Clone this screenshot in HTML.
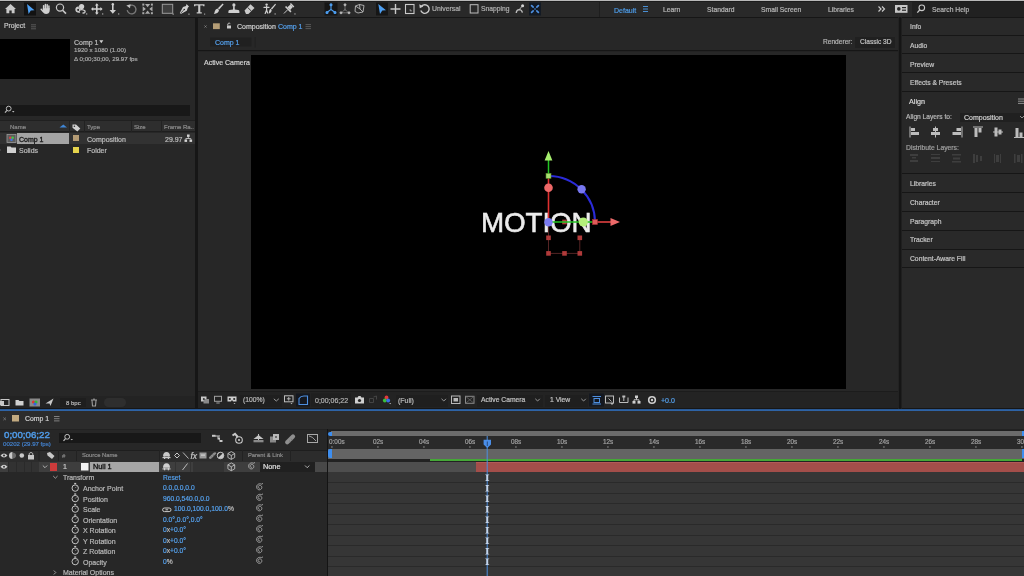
<!DOCTYPE html>
<html><head><meta charset="utf-8">
<style>
*{margin:0;padding:0;box-sizing:border-box}
html,body{width:1024px;height:576px;overflow:hidden;background:#161616;font-family:"Liberation Sans",sans-serif;color:#bdbdbd}
.a{position:absolute}
.t{position:absolute;white-space:nowrap;line-height:1;will-change:transform;-webkit-text-stroke-width:0.2px}
.bl{color:#55a0ec}
svg{position:absolute;overflow:visible}
</style></head><body>
<!-- top line -->
<div class="a" style="left:0;top:0;width:1024px;height:1px;background:#b9b9b9"></div>
<!-- toolbar -->
<div class="a" id="toolbar" style="left:0;top:1px;width:1024px;height:16px;background:#292929;border-top:1px solid #1c1c1c"></div>


<!-- toolbar icons -->
<svg style="left:0;top:0" width="1024" height="18" viewBox="0 0 1024 18">
 <g fill="#c9c9c9" stroke="none">
  <!-- home -->
  <path d="M10.5 4 L16 9 L14.6 9 L14.6 13.2 L11.7 13.2 L11.7 10.6 L9.3 10.6 L9.3 13.2 L6.4 13.2 L6.4 9 L5 9 Z"/>
 </g>
 <rect x="24" y="2.5" width="12" height="13" fill="#121212"/>
 <path d="M27 4 L34.5 10.2 L30.8 10.4 L28.6 14 Z" fill="#4d9ff2"/>
 <!-- hand -->
 <g stroke="#cfcfcf" stroke-width="1.45" stroke-linecap="round" fill="none">
  <path d="M43.6 9 L43.6 5.6 M45.4 8.5 L45.4 4.4 M47.2 8.5 L47.2 4.6 M48.9 9 L48.9 6"/>
  <path d="M41.2 9.3 L43.2 11.6"/>
 </g>
 <path d="M42.8 8.3 L49.7 8.3 L49.7 11 Q49.2 14 46 14 Q43.8 14 42.8 12 Z" fill="#cfcfcf"/>
 <!-- zoom -->
 <circle cx="60" cy="7.6" r="3.6" fill="none" stroke="#c9c9c9" stroke-width="1.2"/>
 <path d="M62.6 10.2 L66 13.6" stroke="#c9c9c9" stroke-width="1.6"/>
 <!-- orbit camera -->
 <circle cx="81.6" cy="6.6" r="2.6" fill="#cfcfcf"/>
 <path d="M78.5 7.2 Q75.8 7.4 76 10 Q76.4 12.4 79.5 12.2 M80 9.8 Q83 9 85 11 Q85.5 13.2 83 13" fill="none" stroke="#cfcfcf" stroke-width="1.3" stroke-linecap="round"/>
 <circle cx="78.2" cy="9.9" r="1.6" fill="none" stroke="#cfcfcf" stroke-width="1.1"/>
 <rect x="86" y="13.3" width="1.3" height="1.3" fill="#9a9a9a"/>
 <!-- move cross -->
 <path d="M96.8 4.5 L96.8 13.5 M92.3 9 L101.3 9" stroke="#cfcfcf" stroke-width="1.6"/>
 <path d="M96.8 3.2 L94.9 5.4 L98.7 5.4 Z M96.8 14.8 L94.9 12.6 L98.7 12.6 Z M91 9 L93.2 7.1 L93.2 10.9Z M102.6 9 L100.4 7.1 L100.4 10.9 Z" fill="#cfcfcf"/>
 <rect x="102" y="13.3" width="1.3" height="1.3" fill="#9a9a9a"/>
 <!-- dolly -->
 <path d="M112.8 4 L112.8 11" stroke="#cfcfcf" stroke-width="1.6"/>
 <path d="M109.6 10 L116 10 L112.8 13.8 Z" fill="#cfcfcf"/>
 <circle cx="112.8" cy="4.2" r="1.2" fill="#cfcfcf"/>
 <rect x="118" y="13.3" width="1.3" height="1.3" fill="#9a9a9a"/>
 <!-- rotate -->
 <path d="M128.6 6.2 A4.4 4.4 0 1 1 127.2 10.2" fill="none" stroke="#7a7a7a" stroke-width="1.3"/>
 <path d="M126.3 5.6 L130.6 4.2 L130 8.2 Z" fill="#bdbdbd"/>
 <!-- pan behind -->
 <g fill="#a8a8a8">
  <rect x="142.3" y="3.6" width="2" height="2"/><rect x="150.9" y="3.6" width="2" height="2"/>
  <rect x="142.3" y="12.2" width="2" height="2"/><rect x="150.9" y="12.2" width="2" height="2"/>
  <path d="M145 4 L150.2 4 L147.6 7.2 Z M145 13.8 L150.2 13.8 L147.6 10.6 Z M142.7 6.3 L142.7 11.5 L145.9 8.9 Z M152.5 6.3 L152.5 11.5 L149.3 8.9 Z"/>
 </g>
 <!-- rectangle -->
 <rect x="162.3" y="4.3" width="10.4" height="9" fill="#3e3e3e" stroke="#9a9a9a" stroke-width="1"/>
 <rect x="172.5" y="13.5" width="1.3" height="1.3" fill="#9a9a9a"/>
 <!-- pen -->
 <path d="M186.5 4 L189 6.5 L187.8 7.7 L186.8 10.8 L180.8 14 L179.8 13 L183 7 L186 6 Z" fill="#cfcfcf"/>
 <path d="M180.6 13.2 L183.8 10" stroke="#272727" stroke-width="0.8"/>
 <circle cx="184.3" cy="9.5" r="0.8" fill="#272727"/>
 <rect x="188.3" y="13.5" width="1.3" height="1.3" fill="#9a9a9a"/>
 <!-- T -->
 <path d="M194 4.2 L204.5 4.2 L204.5 6.3 L203.2 6.3 L203 5.6 L200.3 5.6 L200.3 12.3 L201.8 12.3 L201.8 13.5 L196.7 13.5 L196.7 12.3 L198.2 12.3 L198.2 5.6 L195.5 5.6 L195.3 6.3 L194 6.3 Z" fill="#c9c9c9"/>
 <rect x="204" y="13.5" width="1.2" height="1.2" fill="#9a9a9a"/>
 <!-- brush -->
 <path d="M222.6 3.6 L223.6 4.6 L219.2 9.6 L217.9 8.3 Z" fill="#cfcfcf"/>
 <path d="M217.5 8.6 L219 10.1 Q218.8 13.6 213.8 14 Q214.6 12.8 214.8 11.3 Q215.4 9 217.5 8.6Z" fill="#cfcfcf"/>
 <!-- stamp -->
 <circle cx="233.9" cy="4.9" r="1.6" fill="#cfcfcf"/>
 <path d="M233.2 6 L234.6 6 L234.8 9.6 L238.4 9.9 Q239.4 10.2 239.4 11.6 L239.4 13 L228.4 13 L228.4 11.6 Q228.4 10.2 229.4 9.9 L233 9.6 Z" fill="#cfcfcf"/>
 <!-- eraser -->
 <path d="M244.5 10.6 L250.5 4.3 L254.5 8.1 L248.4 14 L246 14 Z" fill="#c9c9c9"/>
 <path d="M247.7 7.5 L251.3 11" stroke="#272727" stroke-width="0.9"/>
 <!-- roto brush -->
 <circle cx="266.6" cy="4.6" r="1.2" fill="#cfcfcf"/>
 <path d="M266.6 6 L266.6 10 L265.2 13.4 M266.6 10 L267.6 13 M264 7.4 L269 7.4" fill="none" stroke="#cfcfcf" stroke-width="1.2" stroke-linecap="round"/>
 <path d="M275.2 3.8 L276 4.6 L272 9.4 L270.9 8.4 Z" fill="#cfcfcf"/>
 <path d="M270.5 8.7 L271.7 9.9 Q271.4 13 268.4 13.4 Q269 12.4 269.1 11.2 Q269.4 9.2 270.5 8.7Z" fill="#cfcfcf"/>
 <rect x="274.5" y="13.3" width="1.3" height="1.3" fill="#9a9a9a"/>
 <!-- puppet pin -->
 <g transform="translate(-2.2 1.6) rotate(45 290 8)">
  <rect x="287.6" y="1.2" width="4.8" height="1.4" fill="#cfcfcf"/>
  <path d="M288.3 2.6 L291.7 2.6 L292 6.6 L288 6.6 Z" fill="#cfcfcf"/>
  <rect x="286.2" y="6.6" width="7.6" height="1.6" fill="#cfcfcf"/>
  <path d="M290 8.2 L290 13.5" stroke="#cfcfcf" stroke-width="0.9"/>
 </g>
 <rect x="294.3" y="13.3" width="1.3" height="1.3" fill="#9a9a9a"/>

 <!-- axis modes -->
 <rect x="324.5" y="2.5" width="13" height="13" fill="#161616"/>
 <g stroke="#4d9ff2" stroke-width="1.1" fill="#4d9ff2">
  <path d="M331 5.5 L331 9.5 L327.2 12.2 M331 9.5 L334.8 12.2" fill="none"/>
  <circle cx="331" cy="4.8" r="1"/><circle cx="327" cy="12.5" r="1"/><circle cx="335" cy="12.5" r="1"/>
 </g>
 <g stroke="#b9b9b9" stroke-width="0.9" fill="#b9b9b9">
  <path d="M345 5.5 L345 9.5 M345 9.5 L341.5 12.5 M345 9.5 L348.5 12.5 M341.5 12.8 L348.5 12.8" fill="none" stroke-dasharray="1.1 0.9"/>
  <circle cx="345" cy="4.8" r="1"/><circle cx="341" cy="12.8" r="1"/><circle cx="349" cy="12.8" r="1"/>
 </g>
 <g stroke="#b9b9b9" stroke-width="0.9" fill="none">
  <path d="M355.5 6 L359.5 4.5 L364 5.5 L363 12 L358 13 L355 11.5 Z M359.5 4.5 L360 9 L363 12 M360 9 L355.5 6"/>
 </g>
 <rect x="376" y="2.5" width="12" height="13" fill="#161616"/>
 <!-- select / move / scale / rotate -->
 <path d="M378.3 4 L386 10.3 L382.3 10.5 L380 14 Z" fill="#4d9ff2"/>
 <path d="M395.5 4 L395.5 14 M390.5 9 L400.5 9" stroke="#c9c9c9" stroke-width="1.4"/>
 <rect x="405.5" y="4.5" width="8.5" height="9" fill="none" stroke="#c9c9c9" stroke-width="1.1"/>
 <path d="M409.5 10 L411 10 L411 11.5" fill="none" stroke="#c9c9c9" stroke-width="0.8"/>
 <path d="M421.5 6.3 A4.3 4.3 0 1 1 420.8 10.5" fill="none" stroke="#c9c9c9" stroke-width="1.4"/>
 <path d="M419.3 4.3 L419.8 8.3 L423.3 6.5 Z" fill="#c9c9c9"/>
 <rect x="470.2" y="4.7" width="7.8" height="8.3" fill="none" stroke="#bdbdbd" stroke-width="1"/>
 <!-- snapping icon -->
 <path d="M516.2 13 Q516.5 9.8 519.2 9.6 Q521.8 9.6 522.4 12.6" fill="none" stroke="#bdbdbd" stroke-width="1.3"/>
 <path d="M519.2 9.6 L522 6.4" stroke="#bdbdbd" stroke-width="1"/>
 <circle cx="522.6" cy="5.8" r="1.5" fill="#d4d4d4"/>
 <rect x="529" y="2.5" width="12" height="13" fill="#131a24"/>
 <g stroke="#4d8fe0" stroke-width="1.7" stroke-linecap="round">
  <path d="M531.6 5.6 L533.2 7.2 M538.4 5.6 L536.8 7.2 M531.6 12.4 L533.2 10.8 M538.4 12.4 L536.8 10.8"/>
 </g>
 <path d="M533.5 7.5 L536.5 10.5 M536.5 7.5 L533.5 10.5" stroke="#3a6aa8" stroke-width="0.7"/>
 <!-- separator -->
 <rect x="599" y="2" width="1" height="15" fill="#1e1e1e"/>
 <!-- workspace menu icon -->
 <path d="M643 6.5 L648 6.5 M643 9 L648 9 M643 11.5 L648 11.5" stroke="#4d9be6" stroke-width="0.9"/>
 <!-- chevrons >> -->
 <path d="M878.5 6.5 L881 9 L878.5 11.5 M882 6.5 L884.5 9 L882 11.5" fill="none" stroke="#c9c9c9" stroke-width="1.2"/>
 <!-- share box -->
 <rect x="895" y="5" width="12.5" height="7.8" fill="#c6c6c6"/>
 <circle cx="898.8" cy="8.9" r="1.8" fill="#272727"/>
 <rect x="902" y="7" width="4" height="1.2" fill="#272727"/><rect x="902" y="9.6" width="4" height="1.2" fill="#272727"/>
 <!-- search -->
 <rect x="912" y="2" width="112" height="15" fill="#212121"/>
 <circle cx="921.8" cy="7.8" r="2.8" fill="none" stroke="#c9c9c9" stroke-width="1.1"/>
 <path d="M919.7 10 L917.3 12.6" stroke="#c9c9c9" stroke-width="1.3"/>
</svg>
<div class="t" style="left:432px;top:5.5px;font-size:6.85px;color:#b0b0b0">Universal</div>
<div class="t" style="left:480.5px;top:5.5px;font-size:6.75px;color:#b0b0b0">Snapping</div>
<div class="t bl" style="left:613.5px;top:6.8px;font-size:7px;color:#4d9be6">Default</div>
<div class="t" style="left:662.5px;top:6.8px;font-size:6.75px;color:#b5b5b5">Learn</div>
<div class="t" style="left:706.5px;top:6.8px;font-size:6.75px;color:#b5b5b5">Standard</div>
<div class="t" style="left:761px;top:6.8px;font-size:6.75px;color:#b5b5b5">Small Screen</div>
<div class="t" style="left:827.5px;top:6.8px;font-size:6.75px;color:#b5b5b5">Libraries</div>
<div class="t" style="left:932px;top:6.8px;font-size:6.75px;color:#b5b5b5">Search Help</div>

<!-- project panel -->
<div class="a" id="proj" style="left:0;top:18px;width:195px;height:390px;background:#272727"></div>


<!-- project panel content -->
<div class="t" style="left:4px;top:23px;font-size:6.8px;color:#c8c8c8">Project</div>
<svg style="left:0;top:0" width="200" height="410">
 <path d="M31 24.8 L36 24.8 M31 26.8 L36 26.8 M31 28.8 L36 28.8" stroke="#5e5e5e" stroke-width="0.9"/>
</svg>
<div class="a" style="left:0;top:39px;width:70px;height:40px;background:#000"></div>
<div class="t" style="left:74px;top:38.5px;font-size:7px;color:#bdbdbd">Comp 1</div>
<svg style="left:0;top:0" width="200" height="410"><path d="M99.3 40.3 L103.3 40.3 L101.3 43.3 Z" fill="#d0d0d0"/></svg>
<div class="t" style="left:74px;top:47px;font-size:6.2px;color:#a8a8a8">1920 x 1080 (1.00)</div>
<div class="t" style="left:74px;top:55.5px;font-size:6.2px;color:#a8a8a8">&#916; 0;00;30;00, 29.97 fps</div>
<!-- search -->
<div class="a" style="left:0;top:105px;width:190px;height:11px;background:#181818"></div>
<svg style="left:0;top:0" width="200" height="410">
 <circle cx="8.7" cy="108.6" r="2.4" fill="none" stroke="#bdbdbd" stroke-width="1"/>
 <path d="M7 110.4 L5 112.6" stroke="#bdbdbd" stroke-width="1.2"/>
 <path d="M12 111 L14.5 111 L13.25 112.4 Z" fill="#bdbdbd"/>
</svg>
<!-- header row -->
<div class="a" style="left:0;top:120px;width:195px;height:12px;background:#2e2e2e;border-top:1px solid #202020;border-bottom:1px solid #1e1e1e"></div>
<div class="a" style="left:69px;top:121px;width:1px;height:11px;background:#222222"></div>
<div class="a" style="left:83.5px;top:121px;width:1px;height:11px;background:#222222"></div>
<div class="a" style="left:130.5px;top:121px;width:1px;height:11px;background:#222222"></div>
<div class="a" style="left:160.5px;top:121px;width:1px;height:11px;background:#222222"></div>
<div class="t" style="left:10px;top:123.5px;font-size:6px;color:#8c8c8c">Name</div>
<div class="t" style="left:87px;top:123.5px;font-size:6px;color:#8c8c8c">Type</div>
<div class="t" style="left:134px;top:123.5px;font-size:6px;color:#8c8c8c">Size</div>
<div class="t" style="left:164px;top:123.5px;font-size:6px;color:#8c8c8c">Frame Ra..</div>
<svg style="left:0;top:0" width="200" height="410">
 <path d="M59.5 127.5 L63.3 124.5 L67 127.5 Z" fill="#3f86d6"/>
 <path d="M72.5 124.5 L76 124.5 L80.3 128.5 L77.3 131.5 L72.5 127.7 Z" fill="#cfcfcf"/>
 <circle cx="74.4" cy="126.2" r="0.8" fill="#2e2e2e"/>
</svg>
<!-- rows -->
<div class="a" style="left:0;top:133px;width:195px;height:11px;background:#323232"></div>
<div class="a" style="left:17px;top:133px;width:52px;height:11px;background:#a4a4a4"></div>
<div class="t" style="left:18.5px;top:135.6px;font-size:7px;color:#1a1a1a;-webkit-text-stroke-width:0.35px">Comp 1</div>
<svg style="left:0;top:0" width="200" height="410">
 <rect x="7" y="134.5" width="9" height="8" fill="#5c5c5c" stroke="#9a9a9a" stroke-width="0.8"/>
 <circle cx="10.3" cy="137.7" r="1.3" fill="#d44"/><circle cx="12.6" cy="137.7" r="1.3" fill="#4c4"/><circle cx="11.5" cy="139.8" r="1.3" fill="#47d"/>
 <rect x="73" y="135" width="6" height="6" fill="#b49b74"/>
 <path d="M176 137 L184 137" stroke="#000" stroke-width="0"/>
 <rect x="187" y="134.5" width="2.6" height="2.4" fill="#d4d4d4"/>
 <rect x="184.5" y="139.5" width="2.6" height="2.4" fill="#d4d4d4"/><rect x="189.5" y="139.5" width="2.6" height="2.4" fill="#d4d4d4"/>
 <path d="M188.3 136.5 L188.3 138.5 M185.8 139.5 L185.8 138.5 L190.8 138.5 L190.8 139.5" fill="none" stroke="#d4d4d4" stroke-width="0.8"/>
 <!-- solids folder -->
 <path d="M0 150 L1 149.5 L1 150.5Z" fill="#888"/>
 <path d="M7 146.5 L10.5 146.5 L11.5 147.5 L16 147.5 L16 153 L7 153 Z" fill="#d0d0d0"/>
 <rect x="73" y="147" width="6" height="6" fill="#e6d44c"/>
</svg>
<div class="t" style="left:87px;top:135.6px;font-size:7px;color:#bdbdbd">Composition</div>
<div class="t" style="left:164.5px;top:135.6px;font-size:7px;color:#bdbdbd">29.97</div>
<div class="t" style="left:18.5px;top:147.4px;font-size:7px;color:#bdbdbd">Solids</div>
<div class="t" style="left:87px;top:147.4px;font-size:7px;color:#bdbdbd">Folder</div>
<!-- bottom toolbar -->
<div class="a" style="left:0;top:396px;width:195px;height:12px;background:#232323"></div>
<svg style="left:0;top:0" width="200" height="410">
 <rect x="1" y="399.5" width="8" height="6" fill="none" stroke="#c8c8c8" stroke-width="1"/>
 <rect x="0" y="401" width="4" height="4" fill="#c8c8c8"/>
 <path d="M15.5 400 L18.5 400 L19.5 401 L23.5 401 L23.5 405.5 L15.5 405.5Z" fill="#d0d0d0"/>
 <rect x="29.5" y="398.5" width="10.5" height="8" fill="#8a8a8a"/>
 <circle cx="33.5" cy="402" r="1.6" fill="#d33"/><circle cx="36" cy="402" r="1.6" fill="#3b3"/><circle cx="35" cy="404" r="1.6" fill="#36d"/>
 <path d="M45.5 403.5 L53.5 398.5 L50.5 406 L49.5 403.5 Z" fill="#c8c8c8"/>
 <rect x="60" y="398" width="26" height="9" fill="#1e1e1e"/>
 <path d="M91 400 L97 400 M92 400.5 L92.5 406 L95.5 406 L96 400.5 M93.3 399 L94.7 399" fill="none" stroke="#9c9c9c" stroke-width="1.1"/>
 <rect x="104" y="398" width="22" height="9" rx="4.5" fill="#2e2e2e"/>
</svg>
<div class="t" style="left:66px;top:399.5px;font-size:6px;color:#b5b5b5">8 bpc</div>

<!-- comp panel -->
<div class="a" id="comp" style="left:198px;top:18px;width:700px;height:390px;background:#272727"></div>


<!-- comp panel content -->
<svg style="left:0;top:0" width="1024" height="410">
 <path d="M204.5 25.5 L206.5 27.5 M206.5 25.5 L204.5 27.5" stroke="#8a8a8a" stroke-width="0.8"/>
 <rect x="213" y="23.3" width="6.8" height="5.8" fill="#b59d76"/>
 <path d="M227 28.5 L227 25.5 L231 25.5 L231 28.5 Z" fill="#c8c8c8"/>
 <path d="M227.8 25.5 L227.8 23.8 Q229 22.2 230.3 23.6" fill="none" stroke="#c8c8c8" stroke-width="0.9"/>
 <path d="M305.5 24.6 L311 24.6 M305.5 26.6 L311 26.6 M305.5 28.6 L311 28.6" stroke="#5e5e5e" stroke-width="0.9"/>
 <!-- sub header line -->
 <rect x="198" y="50" width="700" height="1.2" fill="#161616"/><rect x="254.5" y="37" width="1.2" height="10.5" fill="#222222"/>
 <rect x="210" y="37.5" width="41.5" height="9" fill="#202020"/>
</svg>
<div class="t" style="left:237px;top:22.8px;font-size:7px;color:#cfcfcf">Composition</div>
<div class="t bl" style="left:277.5px;top:22.8px;font-size:7px">Comp 1</div>
<div class="t bl" style="left:215px;top:39px;font-size:7px">Comp 1</div>
<div class="t" style="left:822.5px;top:39px;font-size:6.6px;color:#b5b5b5">Renderer:</div>
<div class="a" style="left:855px;top:37px;width:40px;height:11px;background:#202020"></div>
<div class="t" style="left:859.5px;top:39px;font-size:6.6px;color:#c0c0c0">Classic 3D</div>
<div class="t" style="left:204px;top:58.5px;font-size:7px;color:#d2d2d2">Active Camera</div>
<!-- comp black -->
<div class="a" style="left:251px;top:55px;width:595px;height:334px;background:#000"></div>
<div class="a" style="left:198px;top:391px;width:700px;height:1px;background:#202020"></div>


<!-- MOTION + gizmo -->
<div class="t" style="left:481.2px;top:208.9px;font-size:27.8px;color:#ececec;letter-spacing:-0.1px;-webkit-text-stroke:0.55px #ececec">MOTION</div>
<svg style="left:0;top:0" width="1024" height="410">
 <!-- dim red box -->
 <g stroke="#542424" stroke-width="1" fill="none">
  <path d="M548.5 222 L548.5 253.4 L579.8 253.4 L579.8 237.8"/>
 </g>
 <g fill="#b03a3a">
  <rect x="546.2" y="235.5" width="4.6" height="4.6"/><rect x="577.5" y="235.5" width="4.6" height="4.6"/>
  <rect x="546.2" y="251.1" width="4.6" height="4.6"/><rect x="562.2" y="251.1" width="4.6" height="4.6"/><rect x="577.5" y="251.1" width="4.6" height="4.6"/>
  <rect x="562.2" y="219.7" width="4.6" height="4.6"/>
 </g>
 <!-- blue arc -->
 <path d="M549 176 A46.3 46.3 0 0 1 595 222" fill="none" stroke="#2b2bd9" stroke-width="2"/>
 <circle cx="581.6" cy="189.3" r="4.2" fill="#7777f0"/>
 <!-- red vertical -->
 <path d="M548.5 222 L548.5 176" stroke="#e03030" stroke-width="1.6"/>
 <circle cx="548.5" cy="187.8" r="4.3" fill="#ee6868"/>
 <!-- green vertical -->
 <path d="M548.5 176 L548.5 158" stroke="#22c422" stroke-width="1.5"/>
 <path d="M548.5 151 L544.6 160.6 L552.4 160.6 Z" fill="#a6ee6e"/>
 <rect x="546" y="173.3" width="5" height="5" fill="#a6e070" stroke="#5a8a2a" stroke-width="0.6"/>
 <!-- red horizontal -->
 <path d="M595 222 L612 222" stroke="#e04040" stroke-width="1.6"/>
 <path d="M620 222 L610.5 218 L610.5 226 Z" fill="#ee6a6a"/>
 <!-- green horizontal -->
 <path d="M548.5 222 L594 222" stroke="#22c422" stroke-width="1.6"/>
 <circle cx="583.3" cy="222" r="4.6" fill="#b4f07a"/>
 <rect x="592.5" y="219.5" width="5" height="5" fill="#e05a5a" stroke="#a33" stroke-width="0.6"/>
 <circle cx="548.5" cy="222.2" r="4.2" fill="#7a7af0"/>
</svg>


<!-- viewer toolbar -->
<div class="a" style="left:198px;top:391px;width:700px;height:17px;background:#232323;border-top:1px solid #1c1c1c"></div>
<div class="a" style="left:240px;top:394.5px;width:42px;height:12px;background:#1f1f1f"></div>
<div class="a" style="left:395.5px;top:394.5px;width:52px;height:12px;background:#1f1f1f"></div>
<div class="a" style="left:477px;top:394.5px;width:66px;height:12px;background:#1f1f1f"></div>
<div class="a" style="left:545px;top:394.5px;width:43px;height:12px;background:#1f1f1f"></div>
<svg style="left:0;top:0" width="1024" height="410">
 <g fill="#bdbdbd">
  <!-- icon1 -->
  <rect x="201" y="396.5" width="5.5" height="5" fill="#c8c8c8"/>
  <rect x="203.5" y="399" width="5.5" height="4.5" fill="#8a8a8a"/>
  <circle cx="203.8" cy="399" r="1" fill="#333"/>
 </g>
 <!-- monitor -->
 <rect x="214.5" y="396.3" width="7" height="5" fill="none" stroke="#a0a0a0" stroke-width="1"/>
 <path d="M216.3 403 L219.7 403" stroke="#a0a0a0" stroke-width="1"/>
 <!-- goggles -->
 <path d="M227.5 396.5 L236.5 396.5 L236.5 401.5 L233 401.5 L232 400 L231 401.5 L227.5 401.5 Z" fill="#cfcfcf"/>
 <circle cx="229.8" cy="399" r="1.1" fill="#272727"/><circle cx="234.2" cy="399" r="1.1" fill="#272727"/>
 <path d="M233.5 403 L235.5 403 L234.5 404 Z" fill="#cfcfcf"/>
 <!-- chevron -->
 <path d="M273.8 398.8 L276.3 401 L278.8 398.8" fill="none" stroke="#9a9a9a" stroke-width="1"/>
 <!-- grid icon -->
 <rect x="284.5" y="395.8" width="8.5" height="6" fill="none" stroke="#bdbdbd" stroke-width="1"/>
 <path d="M288.75 397 L288.75 400.6 M286.8 398.8 L290.7 398.8" stroke="#bdbdbd" stroke-width="0.9"/>
 <path d="M290.5 403 L292.5 403 L291.5 404.2 Z" fill="#bdbdbd"/>
 <!-- blue crop -->
 <rect x="296" y="393.5" width="14" height="13" fill="#141820"/>
 <path d="M299 404.5 L299 398.5 Q301 395.5 305 396 L307.5 396 L307.5 404.5 Z" fill="none" stroke="#4d8fe0" stroke-width="1.1"/>
 <!-- timecode box -->
 <rect x="311" y="393.5" width="40" height="13" fill="#1f1f1f"/>
 <!-- camera -->
 <path d="M355 397.5 L357.5 397.5 L358.5 396 L360.5 396 L361.5 397.5 L364 397.5 L364 403.5 L355 403.5 Z" fill="#cfcfcf"/>
 <circle cx="359.5" cy="400.5" r="1.6" fill="#232323"/>
 <!-- dim icon -->
 <path d="M369.5 398.5 L373.5 398.5 L373.5 402.5 L369.5 402.5 Z M373.5 397 L376.5 396 L376.5 399.5" fill="none" stroke="#444" stroke-width="1"/>
 <!-- rgb -->
 <circle cx="386.5" cy="397.5" r="1.9" fill="#e23a3a"/>
 <circle cx="384.8" cy="400.5" r="1.9" fill="#3bbf3b"/>
 <circle cx="388.2" cy="400.5" r="1.9" fill="#3a6ee6"/>
 <path d="M389.2 403 L391.2 403 L390.2 404.2 Z" fill="#bdbdbd"/>
 <!-- chevrons -->
 <path d="M441.5 398.8 L443.8 401 L446 398.8" fill="none" stroke="#9a9a9a" stroke-width="1"/>
 <rect x="451.5" y="396" width="8.5" height="7.5" fill="none" stroke="#b8b8b8" stroke-width="1"/>
 <rect x="453.5" y="398" width="4.5" height="3.5" fill="#b8b8b8"/>
 <rect x="465.5" y="396.3" width="8.5" height="7" fill="none" stroke="#8a8a8a" stroke-width="1"/>
 <path d="M465.5 396.3 L474 403.3 M474 396.3 L465.5 403.3" stroke="#6a6a6a" stroke-width="0.7"/>
 <path d="M535.3 398.8 L537.6 401 L539.8 398.8" fill="none" stroke="#9a9a9a" stroke-width="1"/>
 <path d="M581.3 398.8 L583.6 401 L585.8 398.8" fill="none" stroke="#9a9a9a" stroke-width="1"/>
 <!-- blue 3d view -->
 <rect x="589" y="393.5" width="15" height="13" fill="#141820"/>
 <path d="M592.5 396.5 L601 396.5 M592.5 404 L601 404" stroke="#4d8fe0" stroke-width="1"/>
 <rect x="594" y="398.5" width="5.5" height="4" fill="none" stroke="#4d8fe0" stroke-width="1"/>
 <!-- icons -->
 <rect x="605.5" y="396" width="8" height="7" fill="none" stroke="#bdbdbd" stroke-width="1"/>
 <path d="M608.5 398.5 L611.5 401.5 M611 403.5 L613 403.5 L612 404.5 Z" stroke="#bdbdbd" stroke-width="0.9" fill="#bdbdbd"/>
 <path d="M619.5 397.5 L619.5 402.5 L628 402.5 L628 397.5 M623.8 396 L623.8 401" fill="none" stroke="#bdbdbd" stroke-width="1"/>
 <rect x="622.3" y="395.5" width="3" height="2" fill="#bdbdbd"/>
 <rect x="635" y="395.5" width="3" height="2.6" fill="#cfcfcf"/>
 <rect x="632.5" y="401" width="3" height="2.6" fill="#cfcfcf"/><rect x="637.5" y="401" width="3" height="2.6" fill="#cfcfcf"/>
 <path d="M636.5 398 L636.5 399.8 M634 401 L634 399.8 L639 399.8 L639 401" fill="none" stroke="#cfcfcf" stroke-width="0.9"/>
 <circle cx="652" cy="400" r="3.3" fill="none" stroke="#cfcfcf" stroke-width="1.6"/>
 <circle cx="652" cy="400" r="1.2" fill="#cfcfcf"/>
</svg>
<div class="t" style="left:243px;top:396.5px;font-size:6.75px;color:#b8b8b8">(100%)</div>
<div class="t" style="left:315px;top:396.5px;font-size:7px;color:#b0b0b0">0;00;06;22</div>
<div class="t" style="left:398px;top:396.5px;font-size:7px;color:#b8b8b8">(Full)</div>
<div class="t" style="left:480.5px;top:396.5px;font-size:6.75px;color:#c0c0c0">Active Camera</div>
<div class="t" style="left:549.5px;top:396.5px;font-size:6.75px;color:#c0c0c0">1 View</div>
<div class="t bl" style="left:660.5px;top:396.5px;font-size:7px">+0.0</div>

<div class="a" style="left:898px;top:17px;width:4px;height:392px;background:linear-gradient(90deg,#222 0,#222 1px,#151515 1px,#151515 3px,#1f1f1f 3px)"></div>
<!-- right panels -->
<div class="a" id="right" style="left:902px;top:17px;width:122px;height:391px;background:#161616"></div>

<!-- right panel content -->
<div class="a" style="left:902px;top:18px;width:122px;height:17px;background:#292929"></div>
<div class="t" style="left:909.5px;top:23.9px;font-size:6.75px;color:#c4c4c4">Info</div>
<div class="a" style="left:902px;top:36px;width:122px;height:17px;background:#292929"></div>
<div class="t" style="left:909.5px;top:42.9px;font-size:6.75px;color:#c4c4c4">Audio</div>
<div class="a" style="left:902px;top:54px;width:122px;height:18px;background:#292929"></div>
<div class="t" style="left:909.5px;top:61.7px;font-size:6.75px;color:#c4c4c4">Preview</div>
<div class="a" style="left:902px;top:73px;width:122px;height:18px;background:#292929"></div>
<div class="t" style="left:909.5px;top:80.2px;font-size:6.75px;color:#c4c4c4">Effects &amp; Presets</div>
<div class="a" style="left:902px;top:174px;width:122px;height:18px;background:#292929"></div>
<div class="t" style="left:909.5px;top:181.3px;font-size:6.75px;color:#c4c4c4">Libraries</div>
<div class="a" style="left:902px;top:193px;width:122px;height:18px;background:#292929"></div>
<div class="t" style="left:909.5px;top:199.9px;font-size:6.75px;color:#c4c4c4">Character</div>
<div class="a" style="left:902px;top:212px;width:122px;height:18px;background:#292929"></div>
<div class="t" style="left:909.5px;top:218.7px;font-size:6.75px;color:#c4c4c4">Paragraph</div>
<div class="a" style="left:902px;top:231px;width:122px;height:18px;background:#292929"></div>
<div class="t" style="left:909.5px;top:237.4px;font-size:6.75px;color:#c4c4c4">Tracker</div>
<div class="a" style="left:902px;top:250px;width:122px;height:17px;background:#292929"></div>
<div class="t" style="left:909.5px;top:256.2px;font-size:6.75px;color:#c4c4c4">Content-Aware Fill</div>
<div class="a" style="left:902px;top:92px;width:122px;height:81px;background:#282828"></div>
<div class="a" style="left:902px;top:268px;width:122px;height:140px;background:#292929"></div>
<div class="t" style="left:909px;top:98.2px;font-size:7.2px;color:#d8d8d8">Align</div>
<svg style="left:0;top:0" width="1024" height="410">
 <path d="M1018 99 L1024 99 M1018 101.2 L1024 101.2 M1018 103.4 L1024 103.4" stroke="#9a9a9a" stroke-width="0.9"/>
 <rect x="960" y="113" width="64" height="9" fill="#202020"/>
 <path d="M1020 116 L1022 118 L1024 116" fill="none" stroke="#9a9a9a" stroke-width="0.9"/>
 <g fill="#bcbcbc">
  <rect x="909.5" y="126.5" width="1" height="11"/><rect x="911" y="128" width="4" height="3"/><rect x="911" y="132" width="8" height="3"/>
  <rect x="935" y="126.5" width="1" height="11"/><rect x="933" y="128" width="5" height="3"/><rect x="931" y="132" width="9" height="3"/>
  <rect x="961.5" y="126.5" width="1" height="11"/><rect x="956.5" y="128" width="4.5" height="3"/><rect x="952.5" y="132" width="8.5" height="3"/>
  <rect x="973" y="126.5" width="10" height="1"/><rect x="974.5" y="128" width="3" height="9"/><rect x="978.5" y="128" width="3" height="4.5"/>
  <rect x="993" y="131.5" width="10" height="1"/><rect x="994.5" y="127.5" width="3" height="9"/><rect x="998.5" y="129.5" width="3" height="5"/>
  <rect x="1014" y="137" width="10" height="1"/><rect x="1015.5" y="128" width="3" height="9"/><rect x="1019.5" y="132.5" width="3" height="4.5"/>
 </g>
 <g fill="#3e3e3e">
  <rect x="910" y="154" width="8" height="2"/><rect x="912" y="157" width="4" height="1.5"/><rect x="910" y="160" width="8" height="2"/>
  <rect x="931" y="154" width="9" height="1"/><rect x="931" y="157" width="9" height="2"/><rect x="931" y="161" width="9" height="1"/>
  <rect x="952" y="154" width="9" height="1.5"/><rect x="953" y="157.5" width="7" height="2"/><rect x="952" y="161" width="9" height="1.5"/>
  <rect x="973" y="154" width="2" height="9"/><rect x="976" y="155" width="2" height="7"/><rect x="980" y="156" width="2" height="5"/>
  <rect x="994" y="154" width="1" height="9"/><rect x="996" y="155" width="3" height="7"/><rect x="1000" y="154" width="1" height="9"/>
  <rect x="1014" y="154" width="1.5" height="9"/><rect x="1017" y="155" width="3" height="7"/><rect x="1021" y="154" width="1.5" height="9"/>
 </g>
</svg>
<div class="t" style="left:906px;top:113.5px;font-size:6.65px;color:#b8b8b8">Align Layers to:</div>
<div class="t" style="left:964px;top:113.5px;font-size:7px;color:#d0d0d0">Composition</div>
<div class="t" style="left:906px;top:145px;font-size:6.8px;color:#a0a0a0">Distribute Layers:</div>

<!-- blue line -->
<div class="a" style="left:0;top:409px;width:1024px;height:2px;background:linear-gradient(#28548a,#3069b0)"></div>

<!-- timeline -->
<div class="a" id="tl" style="left:0;top:411px;width:1024px;height:165px;background:#272727"></div>
<div class="a" style="left:0;top:411px;width:1024px;height:19px;background:#2c2c2c;border-bottom:1px solid #222222"></div>


<!-- timeline content -->
<svg style="left:0;top:0" width="1024" height="576">
 <path d="M3.3 417.5 L6 420.2 M6 417.5 L3.3 420.2" stroke="#7a7a7a" stroke-width="0.8"/>
 <rect x="12" y="415" width="7" height="6.5" fill="#c2aa80"/>
 <path d="M54 416.5 L59.5 416.5 M54 418.7 L59.5 418.7 M54 420.9 L59.5 420.9" stroke="#8a8a8a" stroke-width="0.9"/>
 <!-- search -->
 <rect x="59" y="433" width="142" height="10" fill="#181818"/>
 <circle cx="67.2" cy="436.8" r="2.4" fill="none" stroke="#c0c0c0" stroke-width="1"/>
 <path d="M65.5 438.6 L63.5 440.8" stroke="#c0c0c0" stroke-width="1.2"/>
 <path d="M70.5 439 L73 439 L71.75 440.3 Z" fill="#c0c0c0"/>
 <!-- header icons -->
 <g fill="#c8c8c8">
  <rect x="212" y="434.8" width="3.5" height="2"/><rect x="215" y="435.5" width="5" height="1"/>
  <rect x="217.5" y="437.5" width="2.5" height="2"/><rect x="219.5" y="440" width="3" height="2"/>
  <path d="M218 436 L218 438 M219 439 L220 440.5" stroke="#c8c8c8" stroke-width="0.8"/>
 </g>
 <path d="M232.5 435.5 L235 433.8 L237.8 437" stroke="#c8c8c8" stroke-width="2" fill="none"/>
 <circle cx="239" cy="440" r="3.3" fill="none" stroke="#c8c8c8" stroke-width="1.1"/>
 <circle cx="239" cy="440" r="1.1" fill="#c8c8c8"/>
 <path d="M253.5 439 L258.5 435 L263.5 439 Z" fill="#c4c4c4"/>
 <rect x="258" y="434" width="1" height="8" fill="#c4c4c4"/>
 <rect x="253.5" y="440" width="10" height="2.3" fill="#8a8a8a"/>
 <rect x="270" y="436.5" width="6" height="6" fill="#8a8a8a"/>
 <rect x="273" y="434" width="6" height="6" fill="#b8b8b8"/>
 <rect x="275" y="436" width="2" height="2" fill="#6a6a6a"/>
 <path d="M287.2 442.3 L293 436.5" stroke="#8f8f8f" stroke-width="4.2" stroke-linecap="round"/><path d="M289 440.5 L290.6 442 M290.8 438.7 L292.4 440.2" stroke="#6a6a6a" stroke-width="0.6"/>
 <rect x="307.5" y="434.5" width="10" height="8" fill="none" stroke="#a8a8a8" stroke-width="1"/>
 <path d="M309 436 Q312 436 316 441" fill="none" stroke="#a8a8a8" stroke-width="0.9"/>
</svg>
<div class="t" style="left:25px;top:415.8px;font-size:6.9px;color:#cfcfcf">Comp 1</div>
<div class="t bl" style="left:3.5px;top:430.3px;font-size:9.7px;color:#4f9be8;-webkit-text-stroke-width:0.45px">0;00;06;22</div>
<div class="t" style="left:3px;top:441.3px;font-size:6.1px;color:#4381cc">00202 (29.97 fps)</div>

<!-- column header -->
<div class="a" style="left:0;top:449.5px;width:327px;height:12px;background:#2c2c2c;border-top:1px solid #1e1e1e"></div>
<svg style="left:0;top:0" width="340" height="576">
 <path d="M0.5 455.5 Q4 451.5 7.5 455.5 Q4 459.5 0.5 455.5Z" fill="#c8c8c8"/><circle cx="4" cy="455.5" r="1" fill="#2c2c2c"/>
 <path d="M12.5 452 L12.5 459 Q9 459 9 455.5 Q9 452 12.5 452Z" fill="#c8c8c8"/>
 <path d="M13 452.5 Q16 453 16 455.5 Q16 458 13 458.5" fill="#6a6a6a"/>
 <circle cx="21.8" cy="455.5" r="2.3" fill="#c8c8c8"/>
 <rect x="28" y="455" width="6" height="4.5" fill="#c8c8c8"/>
 <path d="M29.2 455 L29.2 453.5 Q31 451.2 32.8 453.5 L32.8 455" fill="none" stroke="#c8c8c8" stroke-width="0.9"/>
 <rect x="38.5" y="450" width="1" height="11" fill="#222222"/>
 <path d="M47 453 L50 452 L54.5 456 L52 459 L47.5 455.5 Z" fill="#c8c8c8"/>
 <rect x="58" y="450" width="1" height="11" fill="#222222"/>
 <rect x="76" y="450" width="1" height="11" fill="#222222"/>
 <rect x="159" y="450" width="1" height="11" fill="#222222"/>
 <rect x="242" y="450" width="1" height="11" fill="#222222"/>
 <rect x="290" y="450" width="1" height="11" fill="#222222"/>
 <!-- switch icons -->
 <g fill="#c8c8c8">
  <path d="M163 456.5 Q163 452.0 166.5 452.0 Q170 452.0 170 456.5 Z"/><rect x="162.5" y="457.0" width="8" height="1.2"/><rect x="164" y="456.5" width="1.2" height="2.5"/><rect x="167.8" y="456.5" width="1.2" height="2.5"/>
 </g>
 <path d="M174.5 455.5 L177 453 L179.5 455.5 L177 458 Z" fill="none" stroke="#c8c8c8" stroke-width="1"/>
 <path d="M183 452.5 L188.5 458.5" stroke="#c8c8c8" stroke-width="0.9"/>
 <text x="190.5" y="459" font-family="Liberation Sans" font-style="italic" font-size="8.5" fill="#c8c8c8" stroke="#c8c8c8" stroke-width="0.2">fx</text>
 <rect x="199.5" y="452.5" width="7" height="6" fill="#9a9a9a"/><rect x="201" y="454.5" width="4" height="1.2" fill="#d0d0d0"/>
 <path d="M208.8 457.6 L213.6 452.8 Q215.8 451.6 216.3 453.6 L211.4 458.5 Q209.3 459.8 208.8 457.6Z" fill="#8e8e8e"/><path d="M210.5 456 L212.3 457.7 M212.3 454.2 L214.1 455.9" stroke="#5a5a5a" stroke-width="0.6"/>
 <circle cx="220.5" cy="455.5" r="3.3" fill="#c8c8c8"/><path d="M218.2 457.8 L222.8 453.2 A3.3 3.3 0 0 1 218.2 457.8Z" fill="#2c2c2c" transform="rotate(180 220.5 455.5)"/><circle cx="220.5" cy="455.5" r="3.3" fill="none" stroke="#c8c8c8" stroke-width="0.8"/>
 <path d="M227.9 453.5 L231.3 451.6 L234.7 453.5 L234.7 457.5 L231.3 459.4 L227.9 457.5 Z M227.9 453.5 L231.3 455.5 L234.7 453.5 M231.3 455.5 L231.3 459.4" fill="none" stroke="#c8c8c8" stroke-width="0.85" stroke-linejoin="round"/>
</svg>
<div class="t" style="left:62px;top:453px;font-size:6px;color:#7a7a7a">#</div>
<div class="t" style="left:82px;top:453px;font-size:5.8px;color:#8c8c8c">Source Name</div>
<div class="t" style="left:248px;top:453px;font-size:5.8px;color:#8c8c8c">Parent &amp; Link</div>

<!-- layer row -->
<div class="a" style="left:0;top:461.5px;width:327px;height:10.5px;background:#3e3e3e"></div>
<div class="a" style="left:8px;top:461.5px;width:31px;height:10.5px;background:#323232"></div>
<div class="a" style="left:90px;top:462px;width:69px;height:9.5px;background:#a6a6a6"></div>
<div class="a" style="left:260px;top:462px;width:55px;height:9.5px;background:#202020"></div>
<div class="a" style="left:315px;top:461.5px;width:12px;height:10.5px;background:#484848"></div>
<svg style="left:0;top:0" width="340" height="576">
 <path d="M0.5 466.8 Q4 462.8 7.5 466.8 Q4 470.8 0.5 466.8Z" fill="#d0d0d0"/><circle cx="4" cy="466.8" r="1" fill="#3e3e3e"/>
 <rect x="8" y="461.5" width="1" height="10.5" fill="#2a2a2a"/><rect x="16" y="461.5" width="1" height="10.5" fill="#2a2a2a"/><rect x="24" y="461.5" width="1" height="10.5" fill="#2a2a2a"/><rect x="31" y="461.5" width="1" height="10.5" fill="#2a2a2a"/>
 <path d="M42.8 465.5 L45 467.7 L47.2 465.5" fill="none" stroke="#c0c0c0" stroke-width="0.9"/>
 <rect x="50" y="463" width="7" height="8" fill="#cc3b3b"/>
 <rect x="81" y="463" width="7.5" height="7.5" fill="#f2f2f2"/>
 <g fill="#d0d0d0">
  <path d="M163 467.8 Q163 463.3 166.5 463.3 Q170 463.3 170 467.8 Z"/><rect x="162.5" y="468.3" width="8" height="1.2"/><rect x="164" y="467.8" width="1.2" height="2.5"/><rect x="167.8" y="467.8" width="1.2" height="2.5"/>
 </g>
 <path d="M182.5 470 L187.5 463.5" stroke="#c8c8c8" stroke-width="0.9"/>
 <rect x="175" y="461.5" width="1" height="10.5" fill="#333"/><rect x="190" y="461.5" width="1" height="10.5" fill="#333"/>
 <rect x="193" y="461.5" width="31" height="10.5" fill="#333"/>
 <path d="M227.9 464.8 L231.3 462.9 L234.7 464.8 L234.7 468.8 L231.3 470.7 L227.9 468.8 Z M227.9 464.8 L231.3 466.8 L234.7 464.8 M231.3 466.8 L231.3 470.7" fill="none" stroke="#c8c8c8" stroke-width="0.85" stroke-linejoin="round"/>
 <path d="M254.60 462.70 L253.35 463.27 L252.55 462.99 L251.72 462.92 L250.91 463.05 L250.17 463.37 L249.54 463.85 L249.06 464.45 L248.74 465.15 L248.61 465.88 L248.66 466.61 L248.87 467.29 L249.25 467.89 L249.74 468.37 L250.32 468.70 L250.96 468.88 L251.60 468.90 L252.21 468.76 L252.76 468.49 L253.22 468.10 L253.56 467.62 L253.76 467.09 L253.83 466.53 L253.76 466.00 L253.57 465.51 L253.27 465.09 L252.89 464.77 L252.45 464.56 L251.99 464.46 L251.54 464.48 L251.11 464.61 L250.75 464.83 L250.46 465.12 L250.26 465.46 L250.15 465.83 L250.14 466.20 L250.22 466.54 L250.38 466.85 L250.59 467.09 L250.85 467.26 L251.13 467.36 L251.41 467.38" fill="none" stroke="#b8b8b8" stroke-width="0.85" stroke-linecap="round"/>
 <path d="M305 465.5 L307.2 467.7 L309.4 465.5" fill="none" stroke="#c0c0c0" stroke-width="0.9"/>
</svg>
<div class="t" style="left:62.5px;top:462.8px;font-size:7px;color:#c8c8c8">1</div>
<div class="t" style="left:92.5px;top:463px;font-size:7.3px;color:#161616;-webkit-text-stroke-width:0.35px">Null 1</div>
<div class="t" style="left:263px;top:463px;font-size:7.3px;color:#e0e0e0">None</div>


<!-- property rows left -->
<svg style="left:0;top:0" width="340" height="576">
 <path d="M53.2 476 L55.4 478.2 L57.6 476" fill="none" stroke="#a8a8a8" stroke-width="0.9"/>
 <path d="M53.8 570.5 L55.8 572.5 L53.8 574.5" fill="none" stroke="#a8a8a8" stroke-width="0.9"/>
 <circle cx="75.2" cy="488.1" r="3.2" fill="none" stroke="#c4c4c4" stroke-width="1"/><rect x="74.2" y="482.9" width="2" height="1.3" fill="#c4c4c4"/><path d="M75.2 488.1 L76.4 486.7" stroke="#9a9a9a" stroke-width="0.8"/>
 <path d="M262.60 483.60 L261.35 484.17 L260.55 483.89 L259.72 483.82 L258.91 483.95 L258.17 484.27 L257.54 484.75 L257.06 485.35 L256.74 486.05 L256.61 486.78 L256.66 487.51 L256.87 488.19 L257.25 488.79 L257.74 489.27 L258.32 489.60 L258.96 489.78 L259.60 489.80 L260.21 489.66 L260.76 489.39 L261.22 489.00 L261.56 488.52 L261.76 487.99 L261.83 487.43 L261.76 486.90 L261.57 486.41 L261.27 485.99 L260.89 485.67 L260.45 485.46 L259.99 485.36 L259.54 485.38 L259.11 485.51 L258.75 485.73 L258.46 486.02 L258.26 486.36 L258.15 486.73 L258.14 487.10 L258.22 487.44 L258.38 487.75 L258.59 487.99 L258.85 488.16 L259.13 488.26 L259.41 488.28" fill="none" stroke="#b4b4b4" stroke-width="0.85" stroke-linecap="round"/>
 <circle cx="75.2" cy="498.6" r="3.2" fill="none" stroke="#c4c4c4" stroke-width="1"/><rect x="74.2" y="493.4" width="2" height="1.3" fill="#c4c4c4"/><path d="M75.2 498.6 L76.4 497.2" stroke="#9a9a9a" stroke-width="0.8"/>
 <path d="M262.60 494.10 L261.35 494.67 L260.55 494.39 L259.72 494.32 L258.91 494.45 L258.17 494.77 L257.54 495.25 L257.06 495.85 L256.74 496.55 L256.61 497.28 L256.66 498.01 L256.87 498.69 L257.25 499.29 L257.74 499.77 L258.32 500.10 L258.96 500.28 L259.60 500.30 L260.21 500.16 L260.76 499.89 L261.22 499.50 L261.56 499.02 L261.76 498.49 L261.83 497.93 L261.76 497.40 L261.57 496.91 L261.27 496.49 L260.89 496.17 L260.45 495.96 L259.99 495.86 L259.54 495.88 L259.11 496.01 L258.75 496.23 L258.46 496.52 L258.26 496.86 L258.15 497.23 L258.14 497.60 L258.22 497.94 L258.38 498.25 L258.59 498.49 L258.85 498.66 L259.13 498.76 L259.41 498.78" fill="none" stroke="#b4b4b4" stroke-width="0.85" stroke-linecap="round"/>
 <circle cx="75.2" cy="509.1" r="3.2" fill="none" stroke="#c4c4c4" stroke-width="1"/><rect x="74.2" y="503.9" width="2" height="1.3" fill="#c4c4c4"/><path d="M75.2 509.1 L76.4 507.7" stroke="#9a9a9a" stroke-width="0.8"/>
 <path d="M262.60 504.60 L261.35 505.17 L260.55 504.89 L259.72 504.82 L258.91 504.95 L258.17 505.27 L257.54 505.75 L257.06 506.35 L256.74 507.05 L256.61 507.78 L256.66 508.51 L256.87 509.19 L257.25 509.79 L257.74 510.27 L258.32 510.60 L258.96 510.78 L259.60 510.80 L260.21 510.66 L260.76 510.39 L261.22 510.00 L261.56 509.52 L261.76 508.99 L261.83 508.43 L261.76 507.90 L261.57 507.41 L261.27 506.99 L260.89 506.67 L260.45 506.46 L259.99 506.36 L259.54 506.38 L259.11 506.51 L258.75 506.73 L258.46 507.02 L258.26 507.36 L258.15 507.73 L258.14 508.10 L258.22 508.44 L258.38 508.75 L258.59 508.99 L258.85 509.16 L259.13 509.26 L259.41 509.28" fill="none" stroke="#b4b4b4" stroke-width="0.85" stroke-linecap="round"/>
 <circle cx="75.2" cy="519.6" r="3.2" fill="none" stroke="#c4c4c4" stroke-width="1"/><rect x="74.2" y="514.4" width="2" height="1.3" fill="#c4c4c4"/><path d="M75.2 519.6 L76.4 518.2" stroke="#9a9a9a" stroke-width="0.8"/>
 <path d="M262.60 515.10 L261.35 515.67 L260.55 515.39 L259.72 515.32 L258.91 515.45 L258.17 515.77 L257.54 516.25 L257.06 516.85 L256.74 517.55 L256.61 518.28 L256.66 519.01 L256.87 519.69 L257.25 520.29 L257.74 520.77 L258.32 521.10 L258.96 521.28 L259.60 521.30 L260.21 521.16 L260.76 520.89 L261.22 520.50 L261.56 520.02 L261.76 519.49 L261.83 518.93 L261.76 518.40 L261.57 517.91 L261.27 517.49 L260.89 517.17 L260.45 516.96 L259.99 516.86 L259.54 516.88 L259.11 517.01 L258.75 517.23 L258.46 517.52 L258.26 517.86 L258.15 518.23 L258.14 518.60 L258.22 518.94 L258.38 519.25 L258.59 519.49 L258.85 519.66 L259.13 519.76 L259.41 519.78" fill="none" stroke="#b4b4b4" stroke-width="0.85" stroke-linecap="round"/>
 <circle cx="75.2" cy="530.1" r="3.2" fill="none" stroke="#c4c4c4" stroke-width="1"/><rect x="74.2" y="524.9" width="2" height="1.3" fill="#c4c4c4"/><path d="M75.2 530.1 L76.4 528.7" stroke="#9a9a9a" stroke-width="0.8"/>
 <path d="M262.60 525.60 L261.35 526.17 L260.55 525.89 L259.72 525.82 L258.91 525.95 L258.17 526.27 L257.54 526.75 L257.06 527.35 L256.74 528.05 L256.61 528.78 L256.66 529.51 L256.87 530.19 L257.25 530.79 L257.74 531.27 L258.32 531.60 L258.96 531.78 L259.60 531.80 L260.21 531.66 L260.76 531.39 L261.22 531.00 L261.56 530.52 L261.76 529.99 L261.83 529.43 L261.76 528.90 L261.57 528.41 L261.27 527.99 L260.89 527.67 L260.45 527.46 L259.99 527.36 L259.54 527.38 L259.11 527.51 L258.75 527.73 L258.46 528.02 L258.26 528.36 L258.15 528.73 L258.14 529.10 L258.22 529.44 L258.38 529.75 L258.59 529.99 L258.85 530.16 L259.13 530.26 L259.41 530.28" fill="none" stroke="#b4b4b4" stroke-width="0.85" stroke-linecap="round"/>
 <circle cx="75.2" cy="540.6" r="3.2" fill="none" stroke="#c4c4c4" stroke-width="1"/><rect x="74.2" y="535.4" width="2" height="1.3" fill="#c4c4c4"/><path d="M75.2 540.6 L76.4 539.2" stroke="#9a9a9a" stroke-width="0.8"/>
 <path d="M262.60 536.10 L261.35 536.67 L260.55 536.39 L259.72 536.32 L258.91 536.45 L258.17 536.77 L257.54 537.25 L257.06 537.85 L256.74 538.55 L256.61 539.28 L256.66 540.01 L256.87 540.69 L257.25 541.29 L257.74 541.77 L258.32 542.10 L258.96 542.28 L259.60 542.30 L260.21 542.16 L260.76 541.89 L261.22 541.50 L261.56 541.02 L261.76 540.49 L261.83 539.93 L261.76 539.40 L261.57 538.91 L261.27 538.49 L260.89 538.17 L260.45 537.96 L259.99 537.86 L259.54 537.88 L259.11 538.01 L258.75 538.23 L258.46 538.52 L258.26 538.86 L258.15 539.23 L258.14 539.60 L258.22 539.94 L258.38 540.25 L258.59 540.49 L258.85 540.66 L259.13 540.76 L259.41 540.78" fill="none" stroke="#b4b4b4" stroke-width="0.85" stroke-linecap="round"/>
 <circle cx="75.2" cy="551.1" r="3.2" fill="none" stroke="#c4c4c4" stroke-width="1"/><rect x="74.2" y="545.9" width="2" height="1.3" fill="#c4c4c4"/><path d="M75.2 551.1 L76.4 549.7" stroke="#9a9a9a" stroke-width="0.8"/>
 <path d="M262.60 546.60 L261.35 547.17 L260.55 546.89 L259.72 546.82 L258.91 546.95 L258.17 547.27 L257.54 547.75 L257.06 548.35 L256.74 549.05 L256.61 549.78 L256.66 550.51 L256.87 551.19 L257.25 551.79 L257.74 552.27 L258.32 552.60 L258.96 552.78 L259.60 552.80 L260.21 552.66 L260.76 552.39 L261.22 552.00 L261.56 551.52 L261.76 550.99 L261.83 550.43 L261.76 549.90 L261.57 549.41 L261.27 548.99 L260.89 548.67 L260.45 548.46 L259.99 548.36 L259.54 548.38 L259.11 548.51 L258.75 548.73 L258.46 549.02 L258.26 549.36 L258.15 549.73 L258.14 550.10 L258.22 550.44 L258.38 550.75 L258.59 550.99 L258.85 551.16 L259.13 551.26 L259.41 551.28" fill="none" stroke="#b4b4b4" stroke-width="0.85" stroke-linecap="round"/>
 <circle cx="75.2" cy="561.6" r="3.2" fill="none" stroke="#c4c4c4" stroke-width="1"/><rect x="74.2" y="556.4" width="2" height="1.3" fill="#c4c4c4"/><path d="M75.2 561.6 L76.4 560.2" stroke="#9a9a9a" stroke-width="0.8"/>
 <path d="M262.60 557.10 L261.35 557.67 L260.55 557.39 L259.72 557.32 L258.91 557.45 L258.17 557.77 L257.54 558.25 L257.06 558.85 L256.74 559.55 L256.61 560.28 L256.66 561.01 L256.87 561.69 L257.25 562.29 L257.74 562.77 L258.32 563.10 L258.96 563.28 L259.60 563.30 L260.21 563.16 L260.76 562.89 L261.22 562.50 L261.56 562.02 L261.76 561.49 L261.83 560.93 L261.76 560.40 L261.57 559.91 L261.27 559.49 L260.89 559.17 L260.45 558.96 L259.99 558.86 L259.54 558.88 L259.11 559.01 L258.75 559.23 L258.46 559.52 L258.26 559.86 L258.15 560.23 L258.14 560.60 L258.22 560.94 L258.38 561.25 L258.59 561.49 L258.85 561.66 L259.13 561.76 L259.41 561.78" fill="none" stroke="#b4b4b4" stroke-width="0.85" stroke-linecap="round"/>
 <rect x="162.6" y="508" width="8.4" height="3.6" rx="1.8" fill="none" stroke="#cccccc" stroke-width="1"/><path d="M165.5 509.8 L168.1 509.8" stroke="#cccccc" stroke-width="1"/>
</svg>
<div class="t" style="left:63px;top:474.8px;font-size:6.9px;color:#b8b8b8">Transform</div>
<div class="t bl" style="left:163px;top:474.8px;font-size:6.6px">Reset</div>
<div class="t" style="left:83.2px;top:485.4px;font-size:7px;color:#b8b8b8">Anchor Point</div>
<div class="t" style="left:83.2px;top:495.9px;font-size:7px;color:#b8b8b8">Position</div>
<div class="t" style="left:83.2px;top:506.4px;font-size:7px;color:#b8b8b8">Scale</div>
<div class="t" style="left:83.2px;top:516.9px;font-size:7px;color:#b8b8b8">Orientation</div>
<div class="t" style="left:83.2px;top:527.4px;font-size:7px;color:#b8b8b8">X Rotation</div>
<div class="t" style="left:83.2px;top:537.9px;font-size:7px;color:#b8b8b8">Y Rotation</div>
<div class="t" style="left:83.2px;top:548.4px;font-size:7px;color:#b8b8b8">Z Rotation</div>
<div class="t" style="left:83.2px;top:558.9px;font-size:7px;color:#b8b8b8">Opacity</div>
<div class="t bl" style="left:163px;top:485.4px;font-size:6.7px">0.0,0.0,0.0</div>
<div class="t bl" style="left:163px;top:495.9px;font-size:6.7px">960.0,540.0,0.0</div>
<div class="t bl" style="left:174px;top:506.4px;font-size:6.7px">100.0,100.0,100.0<span style="color:#bbb">%</span></div>
<div class="t bl" style="left:163px;top:516.9px;font-size:6.7px">0.0&#176;,0.0&#176;,0.0&#176;</div>
<div class="t bl" style="left:163px;top:527.4px;font-size:6.7px">0<span style="color:#bbb">x</span>+0.0&#176;</div>
<div class="t bl" style="left:163px;top:537.9px;font-size:6.7px">0<span style="color:#bbb">x</span>+0.0&#176;</div>
<div class="t bl" style="left:163px;top:548.4px;font-size:6.7px">0<span style="color:#bbb">x</span>+0.0&#176;</div>
<div class="t bl" style="left:163px;top:558.9px;font-size:6.7px">0<span style="color:#bbb">%</span></div>
<div class="t" style="left:63px;top:569.4px;font-size:7px;color:#b8b8b8">Material Options</div>

<!-- timeline right pane -->
<div class="a" style="left:327px;top:429px;width:1px;height:147px;background:#141414"></div>
<div class="a" style="left:328px;top:430px;width:696px;height:1px;background:#202020"></div>
<div class="a" style="left:331px;top:431px;width:691px;height:5px;background:#6c6c6c"></div>
<div class="a" style="left:328px;top:432px;width:3.5px;height:4px;background:#3d8ef0;border-radius:2px 0 0 2px"></div>
<div class="a" style="left:1021.5px;top:431px;width:2.5px;height:5px;background:#3d8ef0"></div>
<div class="a" style="left:328px;top:436px;width:696px;height:13px;background:#2a2a2a"></div>
<div class="a" style="left:328px;top:449px;width:696px;height:9.5px;background:#646464"></div>
<div class="a" style="left:328px;top:449px;width:3.5px;height:9px;background:#3d8ef0;border-radius:2px 0 0 2px"></div>
<div class="a" style="left:1021.5px;top:449px;width:2.5px;height:9px;background:#3d8ef0"></div>
<div class="a" style="left:328px;top:458.5px;width:696px;height:3px;background:#222222"></div>
<div class="a" style="left:429.5px;top:459px;width:592px;height:2px;background:#45a837"></div>
<div class="a" style="left:328px;top:461.5px;width:148px;height:10.5px;background:#4e4e4e"></div>
<div class="a" style="left:475.5px;top:461.5px;width:549px;height:10.5px;background:#a34e4a;border-top:1px solid #b35a58"></div>
<div class="a" style="left:328px;top:472px;width:696px;height:104px;background:#363636"></div>
<div class="a" style="left:328px;top:482.0px;width:696px;height:1px;background:#2a2a2a"></div>
<div class="a" style="left:328px;top:492.5px;width:696px;height:1px;background:#2a2a2a"></div>
<div class="a" style="left:328px;top:503.0px;width:696px;height:1px;background:#2a2a2a"></div>
<div class="a" style="left:328px;top:513.5px;width:696px;height:1px;background:#2a2a2a"></div>
<div class="a" style="left:328px;top:524.0px;width:696px;height:1px;background:#2a2a2a"></div>
<div class="a" style="left:328px;top:534.5px;width:696px;height:1px;background:#2a2a2a"></div>
<div class="a" style="left:328px;top:545.0px;width:696px;height:1px;background:#2a2a2a"></div>
<div class="a" style="left:328px;top:555.5px;width:696px;height:1px;background:#2a2a2a"></div>
<div class="a" style="left:328px;top:566.0px;width:696px;height:1px;background:#2a2a2a"></div>
<div class="a" style="left:328px;top:576.5px;width:696px;height:1px;background:#2a2a2a"></div>
<svg style="left:0;top:0" width="1024" height="576">
 <rect x="331.5" y="446" width="0.9" height="2" fill="#8a8a8a"/>
 <rect x="377.5" y="446" width="0.9" height="2" fill="#8a8a8a"/>
 <rect x="423.5" y="446" width="0.9" height="2" fill="#8a8a8a"/>
 <rect x="469.5" y="446" width="0.9" height="2" fill="#8a8a8a"/>
 <rect x="515.5" y="446" width="0.9" height="2" fill="#8a8a8a"/>
 <rect x="561.5" y="446" width="0.9" height="2" fill="#8a8a8a"/>
 <rect x="607.5" y="446" width="0.9" height="2" fill="#8a8a8a"/>
 <rect x="653.5" y="446" width="0.9" height="2" fill="#8a8a8a"/>
 <rect x="699.5" y="446" width="0.9" height="2" fill="#8a8a8a"/>
 <rect x="745.5" y="446" width="0.9" height="2" fill="#8a8a8a"/>
 <rect x="791.5" y="446" width="0.9" height="2" fill="#8a8a8a"/>
 <rect x="837.5" y="446" width="0.9" height="2" fill="#8a8a8a"/>
 <rect x="883.5" y="446" width="0.9" height="2" fill="#8a8a8a"/>
 <rect x="929.5" y="446" width="0.9" height="2" fill="#8a8a8a"/>
 <rect x="975.5" y="446" width="0.9" height="2" fill="#8a8a8a"/>
 <rect x="1021.5" y="446" width="0.9" height="2" fill="#8a8a8a"/>

 <path d="M487.2 436 L487.2 576" stroke="#4a8ee0" stroke-width="1"/>
 <path d="M483.6 439.8 L491 439.8 L491 444.5 L487.3 448 L483.6 444.5 Z" fill="#4a8ee8"/>
 <path d="M487.3 441.5 L487.3 446" stroke="#1e3a66" stroke-width="0.8"/>
 <path d="M485 474.4 L489.5 474.4 L488.2 475.5 L488.2 479.9 L489.5 481.0 L485 481.0 L486.3 479.9 L486.3 475.5 Z" fill="#c4d4ea"/>
 <path d="M485 484.9 L489.5 484.9 L488.2 486.0 L488.2 490.4 L489.5 491.5 L485 491.5 L486.3 490.4 L486.3 486.0 Z" fill="#c4d4ea"/>
 <path d="M485 495.4 L489.5 495.4 L488.2 496.5 L488.2 500.9 L489.5 502.0 L485 502.0 L486.3 500.9 L486.3 496.5 Z" fill="#c4d4ea"/>
 <path d="M485 505.9 L489.5 505.9 L488.2 507.0 L488.2 511.4 L489.5 512.5 L485 512.5 L486.3 511.4 L486.3 507.0 Z" fill="#c4d4ea"/>
 <path d="M485 516.4 L489.5 516.4 L488.2 517.5 L488.2 521.9 L489.5 523.0 L485 523.0 L486.3 521.9 L486.3 517.5 Z" fill="#c4d4ea"/>
 <path d="M485 526.9 L489.5 526.9 L488.2 528.0 L488.2 532.4 L489.5 533.5 L485 533.5 L486.3 532.4 L486.3 528.0 Z" fill="#c4d4ea"/>
 <path d="M485 537.4 L489.5 537.4 L488.2 538.5 L488.2 542.9 L489.5 544.0 L485 544.0 L486.3 542.9 L486.3 538.5 Z" fill="#c4d4ea"/>
 <path d="M485 547.9 L489.5 547.9 L488.2 549.0 L488.2 553.4 L489.5 554.5 L485 554.5 L486.3 553.4 L486.3 549.0 Z" fill="#c4d4ea"/>
 <path d="M485 558.4 L489.5 558.4 L488.2 559.5 L488.2 563.9 L489.5 565.0 L485 565.0 L486.3 563.9 L486.3 559.5 Z" fill="#c4d4ea"/>
</svg>
<div class="t" style="left:328.6px;top:438.6px;font-size:6.4px;color:#a0a0a0">0:00s</div>
<div class="t" style="left:372.9px;top:438.6px;font-size:6.4px;color:#a0a0a0">02s</div>
<div class="t" style="left:418.9px;top:438.6px;font-size:6.4px;color:#a0a0a0">04s</div>
<div class="t" style="left:464.9px;top:438.6px;font-size:6.4px;color:#a0a0a0">06s</div>
<div class="t" style="left:510.9px;top:438.6px;font-size:6.4px;color:#a0a0a0">08s</div>
<div class="t" style="left:556.9px;top:438.6px;font-size:6.4px;color:#a0a0a0">10s</div>
<div class="t" style="left:602.9px;top:438.6px;font-size:6.4px;color:#a0a0a0">12s</div>
<div class="t" style="left:648.9px;top:438.6px;font-size:6.4px;color:#a0a0a0">14s</div>
<div class="t" style="left:694.9px;top:438.6px;font-size:6.4px;color:#a0a0a0">16s</div>
<div class="t" style="left:740.9px;top:438.6px;font-size:6.4px;color:#a0a0a0">18s</div>
<div class="t" style="left:786.9px;top:438.6px;font-size:6.4px;color:#a0a0a0">20s</div>
<div class="t" style="left:832.9px;top:438.6px;font-size:6.4px;color:#a0a0a0">22s</div>
<div class="t" style="left:878.9px;top:438.6px;font-size:6.4px;color:#a0a0a0">24s</div>
<div class="t" style="left:924.9px;top:438.6px;font-size:6.4px;color:#a0a0a0">26s</div>
<div class="t" style="left:970.9px;top:438.6px;font-size:6.4px;color:#a0a0a0">28s</div>
<div class="t" style="left:1016.6px;top:438.6px;font-size:6.4px;color:#a0a0a0">30s</div>

</body></html>
